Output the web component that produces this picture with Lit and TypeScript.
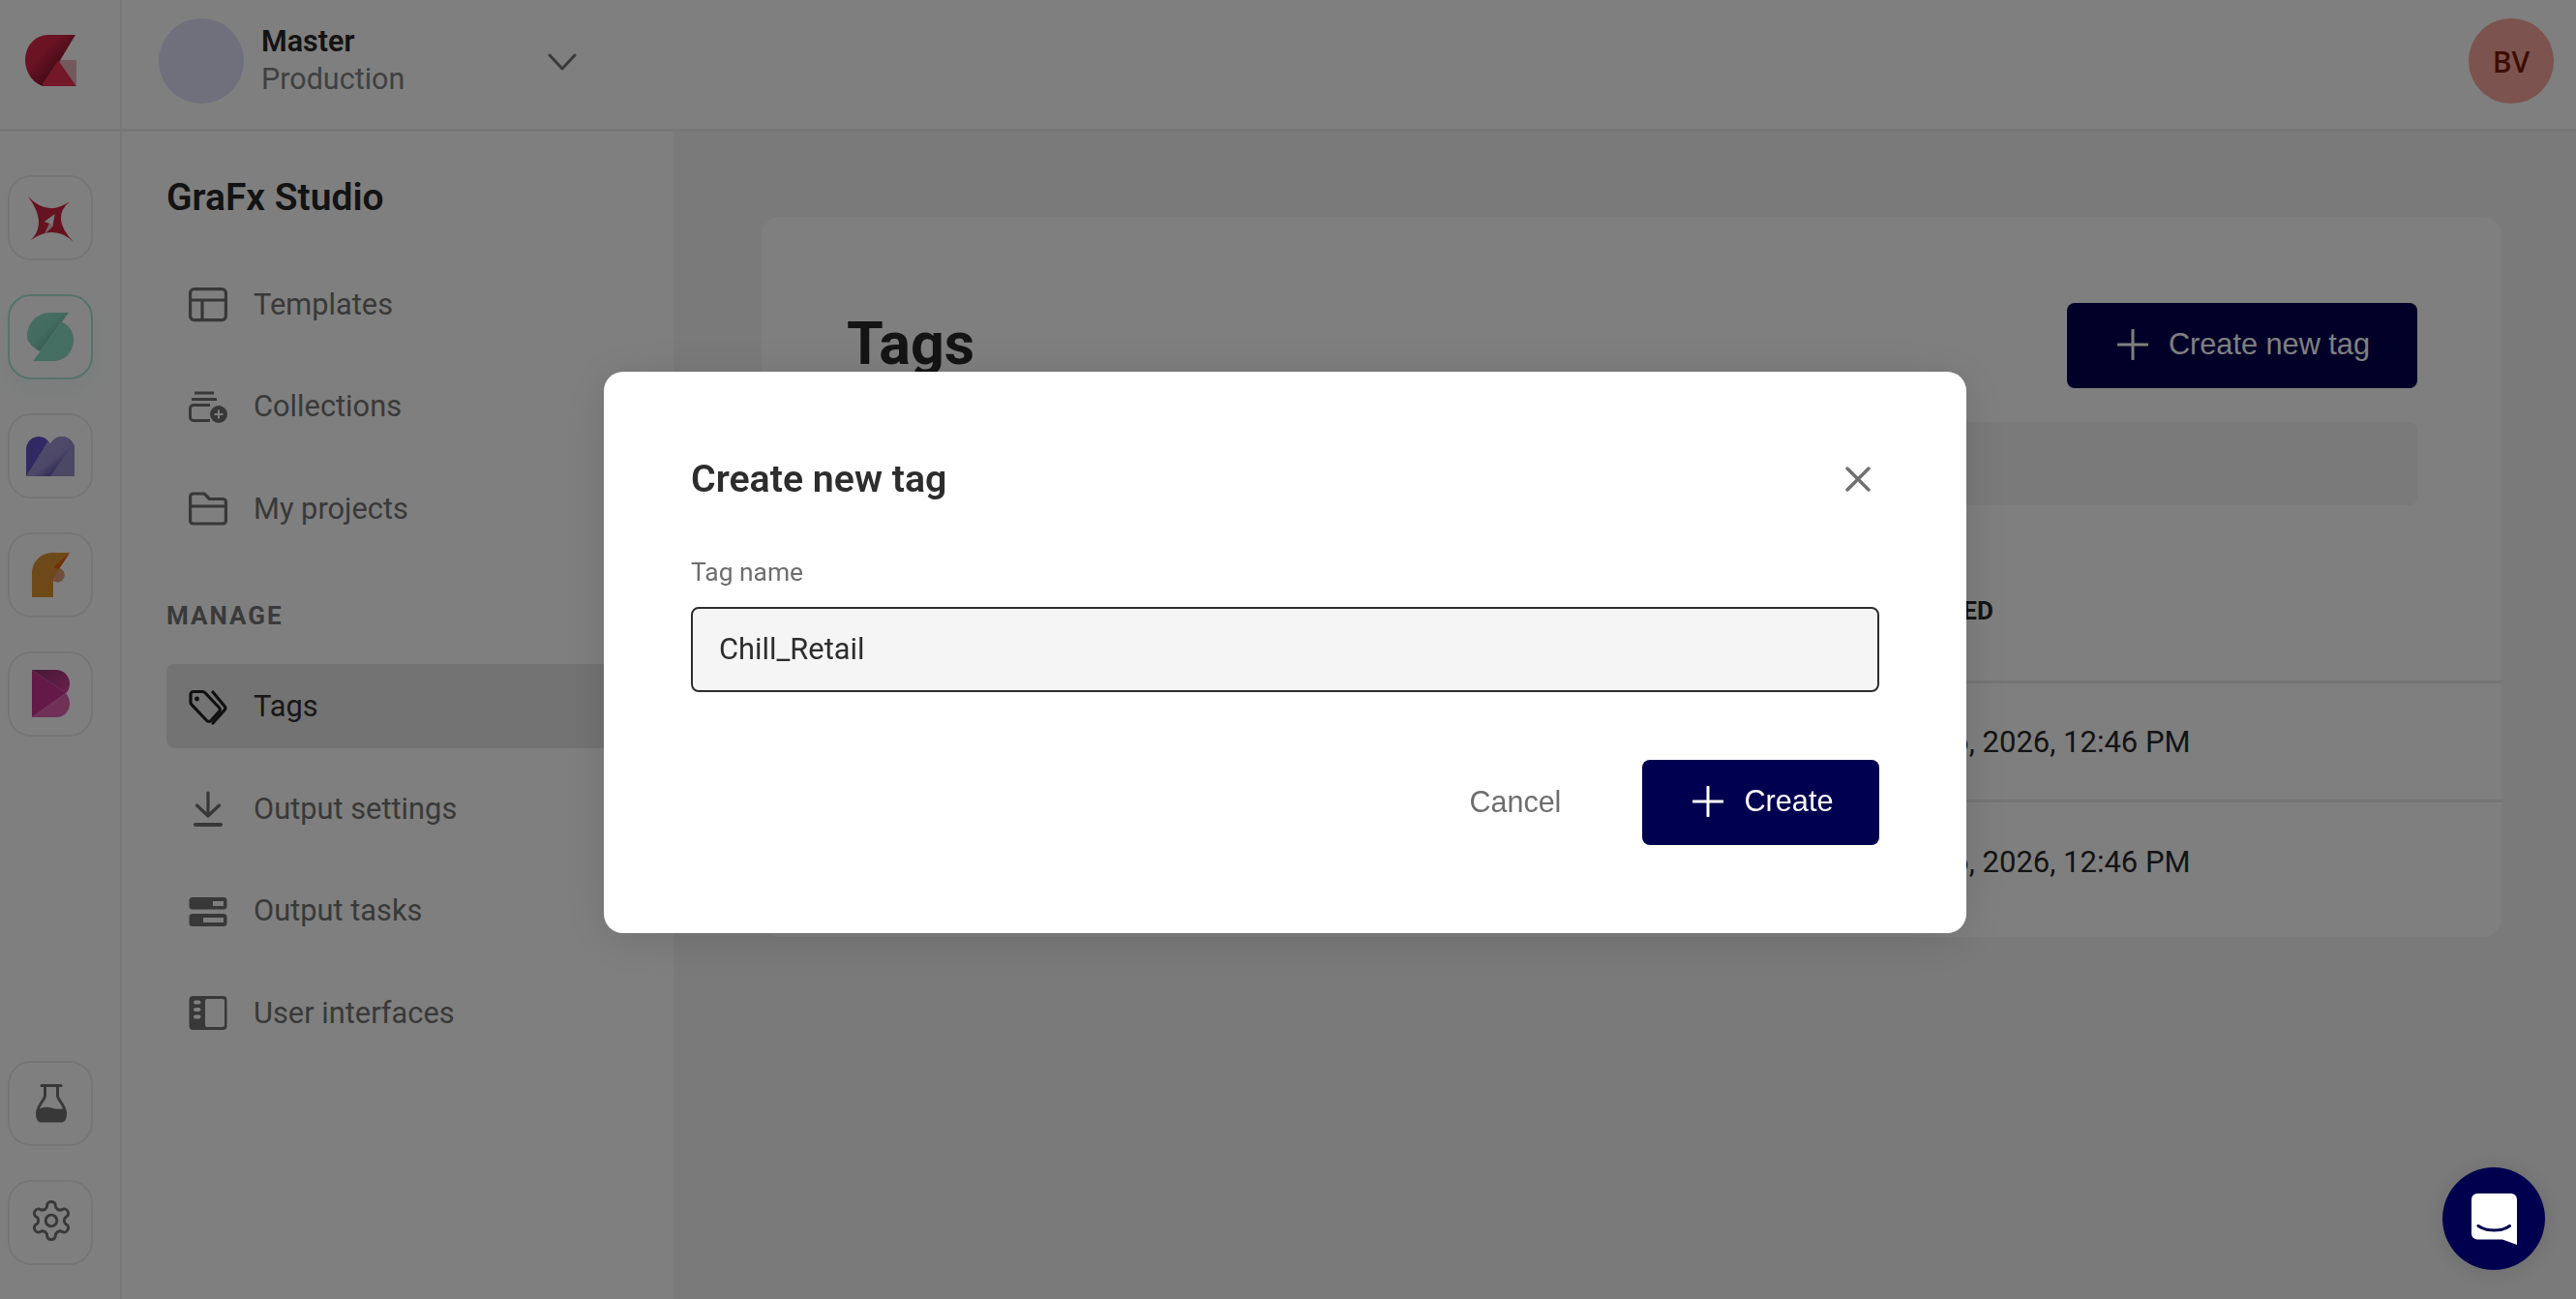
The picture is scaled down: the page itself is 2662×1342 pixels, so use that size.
import { LitElement, html, css, svg } from "lit";
import { customElement } from "lit/decorators.js";

const D = "#707070";
const navIcons: Record<string, unknown> = {
  templates: svg`<rect x="1.6" y="4.6" width="36.8" height="32" rx="4" fill="none" stroke="${D}" stroke-width="3.2"/><path d="M2 16H38M14 16V36" fill="none" stroke="${D}" stroke-width="3.2"/>`,
  collections: svg`<path d="M6 6H26M3 12.5H29" stroke="${D}" stroke-width="3" fill="none"/><path d="M22 18.5H5a3.5 3.5 0 0 0-3.500 3.500V31a3.500 3.500 0 0 0 3.500 3.500H22" stroke="${D}" stroke-width="3" fill="none"/><circle cx="31" cy="28" r="9" fill="${D}"/><path d="M31 23.500V32.500M26.500 28H35.500" stroke="#fff" stroke-width="2"/>`,
  folder: svg`<path d="M1.600 8a3 3 0 0 1 3-3H16l5.500 5.500H35.400a3 3 0 0 1 3 3V33a3 3 0 0 1-3 3H4.600a3 3 0 0 1-3-3Z" fill="none" stroke="${D}" stroke-width="3.200" stroke-linejoin="round"/><path d="M2 18H38" stroke="${D}" stroke-width="3.200"/>`,
  tags: svg`<path d="M5 4.500H14.500a3 3 0 0 1 2.200 1L31.500 21a3 3 0 0 1 0 4.200L23 34.500a3 3 0 0 1-4.300 0L3 18a3 3 0 0 1-1-2.200V7.500a3 3 0 0 1 3-3Z" fill="none" stroke="#202020" stroke-width="3.200"/><circle cx="8.500" cy="12" r="2.400" fill="#202020"/><path d="M25 5L37 19.500a3 3 0 0 1 0 4L25 37" fill="none" stroke="#202020" stroke-width="3.200" stroke-linecap="round"/>`,
  download: svg`<path d="M20 4V28M8.500 17L20 28L31.500 17" fill="none" stroke="${D}" stroke-width="3.200" stroke-linecap="round" stroke-linejoin="round"/><path d="M7 37H33" stroke="${D}" stroke-width="4" stroke-linecap="round"/>`,
  tasks: svg`<rect x="0.500" y="6" width="39" height="12.500" rx="3.500" fill="${D}"/><rect x="25" y="10" width="11" height="5" fill="#fff"/><rect x="0.500" y="23" width="39" height="13" rx="3.500" fill="${D}"/><rect x="15" y="27" width="21" height="5" fill="#fff"/>`,
  ui: svg`<rect x="0.500" y="3" width="39" height="35" rx="4" fill="${D}"/><rect x="17" y="6" width="20" height="29" rx="2" fill="#fff"/><rect x="5" y="7.500" width="7.500" height="4" rx="2" fill="#fff"/><rect x="5" y="15" width="7.500" height="4" rx="2" fill="#fff"/><rect x="5" y="22.500" width="7.500" height="4" rx="2" fill="#fff"/>`,
};

const railIcons = {
  star: svg`<path d="M21 22Q41.500 43.500 64 27Q44 44 68 69Q48 50 24 67Q41.500 49.500 21 22Z" fill="#cc2440"/><path d="M48.700 40L37.700 48L42.700 49.700L46.500 53Z" fill="#f4f0f0"/><path d="M43 49.700L37.500 61.500L46.500 53Z" fill="#e8c8cc"/>`,
  green: svg`<defs><linearGradient id="g1" x1="0" y1="0" x2="1" y2="1"><stop offset="0" stop-color="#90dcc8"/><stop offset=".45" stop-color="#88d6c0"/><stop offset=".75" stop-color="#66b49e"/></linearGradient></defs><path d="M63 19H44C30 19 20 30 20 43C20 50 26 55 33.400 59Z" fill="url(#g1)"/><path d="M26 69H47C59 69 68 60 68 47C68 39 64 32 56 28.700Z" fill="#8adcc6"/>`,
  m: svg`<defs><linearGradient id="g2" x1="0" y1="0" x2="1" y2="1"><stop offset="0" stop-color="#a89cdc"/><stop offset=".55" stop-color="#9c90d0"/><stop offset=".85" stop-color="#3e3096"/></linearGradient><clipPath id="mc"><path d="M19 65V37A13 13 0 0 1 44 32A13 13 0 0 1 69 37V65Z"/></clipPath></defs><g clip-path="url(#mc)"><rect x="19" y="24" width="50" height="41" fill="#6052c8"/><path d="M19 65L47 20H75L44 65Z" fill="url(#g2)"/><path d="M44 65L72 24V65Z" fill="#9490c8"/></g>`,
  f: svg`<defs><linearGradient id="g3" x1="0" y1="1" x2="1" y2="0"><stop offset="0" stop-color="#dc9028"/><stop offset=".6" stop-color="#e09030"/><stop offset="1" stop-color="#e84c08"/></linearGradient></defs><circle cx="51.300" cy="44" r="7.500" fill="#e09c78"/><path d="M25 67V43C25 30 34 21 47 21H64L47 47V67Z" fill="#dc9434"/><path d="M25 67L62 24L64 21L47 47V67Z" fill="url(#g3)"/><path d="M47 36L64 21L52 38Z" fill="#e84c08" opacity=".7"/>`,
  b: svg`<defs><linearGradient id="g4" x1="0" y1="0" x2="1" y2="1"><stop offset="0" stop-color="#883270"/><stop offset="1" stop-color="#d84096"/></linearGradient></defs><path d="M25 19H50C58 19 64 26 64 33C64 38 62 42 60 43L25 19Z" fill="url(#g4)"/><path d="M25 19L60 43L25 68Z" fill="#c83292"/><path d="M25 68L60 43C62 45 64 50 64 54C64 62 58 68 50 68Z" fill="#e060b0"/>`,
  flask: svg`<path d="M35 25.500H55" stroke="${D}" stroke-width="3" stroke-linecap="round"/><path d="M38.500 26V36C38.500 40 30.500 46 30.500 54C30.500 58 32 61.500 34 62H56C58 61.500 59.500 58 59.500 54C59.500 46 51.500 40 51.500 36V26" fill="none" stroke="${D}" stroke-width="3"/><path d="M30 52C34 47 40 47 45 48.500C50 50 55 50 60 49V55C60 59 58 63 56 63H34C32 63 30 59 30 55Z" fill="${D}"/>`,
  gear: svg`<g transform="translate(21.600 18.600) scale(1.950)" fill="none" stroke="${D}" stroke-width="1.500"><path d="M12.220 2h-.440a2 2 0 0 0-2 2v.180a2 2 0 0 1-1 1.730l-.430.250a2 2 0 0 1-2 0l-.150-.080a2 2 0 0 0-2.730.730l-.220.380a2 2 0 0 0 .730 2.730l.150.100a2 2 0 0 1 1 1.720v.510a2 2 0 0 1-1 1.740l-.150.090a2 2 0 0 0-.730 2.730l.220.380a2 2 0 0 0 2.730.730l.150-.080a2 2 0 0 1 2 0l.430.250a2 2 0 0 1 1 1.730V20a2 2 0 0 0 2 2h.440a2 2 0 0 0 2-2v-.180a2 2 0 0 1 1-1.730l.430-.250a2 2 0 0 1 2 0l.150.080a2 2 0 0 0 2.730-.730l.220-.390a2 2 0 0 0-.730-2.730l-.150-.080a2 2 0 0 1-1-1.740v-.500a2 2 0 0 1 1-1.740l.150-.090a2 2 0 0 0 .730-2.730l-.220-.380a2 2 0 0 0-2.730-.730l-.150.080a2 2 0 0 1-2 0l-.430-.250a2 2 0 0 1-1-1.730V4a2 2 0 0 0-2-2z"/><circle cx="12" cy="12" r="3"/></g>`,
};

const plus = html`<svg class="plus" viewBox="0 0 32 32"><path d="M16 1V31M1 16H31" fill="none" stroke="currentColor" stroke-width="3" stroke-linecap="round"/></svg>`;

@customElement("app-root")
export class AppRoot extends LitElement {
  static styles = css`
    :host { display: block; height: 100vh; overflow: hidden; position: relative; font-family: Roboto, "Liberation Sans", sans-serif; color: #282828; background: #f5f5f5; }
    .top { height: 136px; display: flex; background: #fff; border-bottom: 3px solid #eeeeee; box-sizing: border-box; }
    .logo { width: 126px; box-sizing: border-box; border-right: 2px solid #eeeeee; flex: none; }
    .logo svg { display: block; width: 124px; height: 133px; }
    .env { display: flex; align-items: center; padding: 0 0 8px 38px; flex: 1; }
    .env-dot { width: 88px; height: 88px; border-radius: 50%; background: #e0e0fa; flex: none; }
    .env-text { margin-left: 18px; width: 296px; line-height: 39px; padding-bottom: 2px; font-size: 30.500px; }
    .env-text b { display: block; font-weight: 600; color: #262626; }
    .env-text span { display: block; color: #808080; }
    .chev { width: 30px; height: 18px; flex: none; margin-top: 3px; }
    .me { width: 88px; height: 88px; border-radius: 50%; background: #f8a69c; color: #7a1a00; font-size: 30px; font-weight: 600; display: flex; align-items: center; justify-content: center; margin: 19px 23px 0 0; flex: none; font-family: "Open Sans", sans-serif; }
    .body { display: flex; height: calc(100vh - 136px); }
    .rail { width: 126px; box-sizing: border-box; flex: none; background: #fff; border-right: 2px solid #eeeeee; padding: 45px 0 35px 8px; display: flex; flex-direction: column; gap: 35px; }
    .rail .spacer { flex: 1; margin-bottom: -35px; }
    .rbtn { width: 88px; height: 88px; box-sizing: border-box; border: 2px solid #ebebeb; border-radius: 24px; flex: none; }
    .rbtn.on { border-color: #a8e6d6; box-shadow: 0 10px 20px rgba(120, 220, 190, .12); }
    .rbtn svg { display: block; width: 84px; height: 84px; }
    .side { width: 570px; box-sizing: border-box; flex: none; background: #fff; padding: 44px 24px 0 46px; }
    .side h2 { margin: 0 0 42.500px; font-size: 39px; line-height: 48px; font-weight: 600; color: #262626; }
    .item { height: 87px; display: flex; align-items: center; padding-left: 23px; gap: 27px; font-size: 30.800px; color: #727272; border-radius: 8px; margin-bottom: 18.500px; }
    .item svg { width: 40px; height: 40px; flex: none; }
    .item.on { background: #e6e6e6; color: #303030; }
    .sec { font-size: 26px; line-height: 32px; font-weight: 700; letter-spacing: 2px; color: #747474; margin: 51.500px 0 34px; }
    .main { flex: 1; padding: 88px 77px 0 91px; }
    .card { background: #fff; border-radius: 20px; height: 744px; padding-top: 89px; box-sizing: border-box; }
    .card-head { display: flex; justify-content: space-between; align-items: center; padding: 0 87px 0 88px; }
    .card-head h1 { margin: 0; padding-bottom: 4px; font-size: 61px; font-weight: 700; color: #282828; }
    .btn { display: flex; align-items: center; gap: 21px; height: 88px; box-sizing: border-box; padding: 0 49px 2px 52px; background: #000050; color: #fff; border-radius: 8px; font-family: "Liberation Sans", Arial, sans-serif; font-size: 30.700px; flex: none; }
    .actions .btn { padding-right: 47.500px; }
    .plus { width: 32px; height: 32px; flex: none; }
    .search { height: 86px; margin: 35px 87px 0 88px; background: #f5f5f5; border-radius: 8px; }
    .thead, .row { display: grid; grid-template-columns: 1161px 1fr; align-items: center; }
    .thead { height: 184px; padding-top: 36px; box-sizing: border-box; border-bottom: 3px solid #ebebeb; font-size: 26px; font-weight: 700; color: #282828; }
    .row { height: 123px; box-sizing: border-box; border-bottom: 3px solid #ebebeb; font-size: 31px; color: #282828; }
    .row span:last-child { padding-left: 11px; }
    .row:last-child { border-bottom: 0; }
    .scrim { position: fixed; inset: 0; background: rgba(0, 0, 0, .5); padding: 384px 0 0 624px; box-sizing: border-box; }
    .modal { width: 1408px; height: 580px; box-sizing: border-box; padding: 88px 90px 0; background: #fff; border-radius: 20px; box-shadow: 0 6px 50px rgba(0, 0, 0, .12); color: #2d2d2d; }
    .m-head { display: flex; justify-content: space-between; align-items: center; height: 46px; }
    .m-head h3 { margin: 0; font-size: 39.300px; font-weight: 600; }
    .x { width: 26px; height: 26px; margin-right: 9px; }
    .label { font-size: 26.400px; line-height: 32px; color: #6e6e6e; margin: 57px 0 20px; }
    .input { height: 88px; box-sizing: border-box; border: 2px solid #2d2d2d; border-radius: 8px; background: #f5f5f5; display: flex; align-items: center; padding: 0 0 2px 27px; font-size: 30.800px; }
    .actions { display: flex; justify-content: flex-end; align-items: center; margin-top: 70px; }
    .cancel { font-family: "Liberation Sans", Arial, sans-serif; font-size: 30.500px; color: #6e6e6e; margin-right: 84px; padding-bottom: 2px; }
    .chat { position: fixed; left: 2524px; top: 1206px; width: 106px; height: 106px; border-radius: 50%; background: #00004f; box-shadow: 0 2px 24px rgba(0, 0, 0, .12); display: flex; align-items: center; justify-content: center; }
    .chat svg { width: 47px; height: 53px; }
  `;

  render() {
    const nav = (k: string, t: string, on = false) => html`<div class="item ${on ? "on" : ""}"><svg viewBox="0 0 40 40">${navIcons[k]}</svg>${t}</div>`;
    const rb = (k: keyof typeof railIcons, on = false) => html`<div class="rbtn ${on ? "on" : ""}"><svg viewBox="2 2 84 84">${railIcons[k]}</svg></div>`;
    return html`
      <div class="top">
        <div class="logo"><svg viewBox="0 0 124 133">
          <defs><linearGradient id="lg" x1="0" y1="0" x2="1" y2="1"><stop offset="0" stop-color="#dc284a"/><stop offset=".35" stop-color="#d42646"/><stop offset=".7" stop-color="#80122c"/></linearGradient></defs>
          <path d="M60 62L79 62V89Z" fill="#e8b4bc"/>
          <path d="M78 36H50C36 36 26 48 26 62C26 76 36 88 46 89Z" fill="url(#lg)"/>
          <path d="M60 62L79 89H46C44 89 43 88 43 88Z" fill="#e63052"/>
        </svg></div>
        <div class="env">
          <div class="env-dot"></div>
          <div class="env-text"><b>Master</b><span>Production</span></div>
          <svg class="chev" viewBox="0 0 30 18"><path d="M2 2L15 16L28 2" fill="none" stroke="#747474" stroke-width="3" stroke-linecap="round" stroke-linejoin="round"/></svg>
        </div>
        <div class="me">BV</div>
      </div>
      <div class="body">
        <div class="rail">
          ${rb("star")}${rb("green", true)}${rb("m")}${rb("f")}${rb("b")}
          <div class="spacer"></div>
          ${rb("flask")}${rb("gear")}
        </div>
        <div class="side">
          <h2>GraFx Studio</h2>
          ${nav("templates", "Templates")}${nav("collections", "Collections")}${nav("folder", "My projects")}
          <div class="sec">MANAGE</div>
          ${nav("tags", "Tags", true)}${nav("download", "Output settings")}${nav("tasks", "Output tasks")}${nav("ui", "User interfaces")}
        </div>
        <div class="main">
          <div class="card">
            <div class="card-head"><h1>Tags</h1><div class="btn">${plus}Create new tag</div></div>
            <div class="search"></div>
            <div class="thead"><span></span><span>CREATED</span></div>
            <div class="row"><span></span><span>Feb 6, 2026, 12:46 PM</span></div>
            <div class="row"><span></span><span>Feb 6, 2026, 12:46 PM</span></div>
          </div>
        </div>
      </div>
      <div class="scrim">
        <div class="modal">
          <div class="m-head"><h3>Create new tag</h3><svg class="x" viewBox="0 0 26 26"><path d="M2 2L24 24M24 2L2 24" fill="none" stroke="#707070" stroke-width="3.500" stroke-linecap="round"/></svg></div>
          <div class="label">Tag name</div>
          <div class="input">Chill_Retail</div>
          <div class="actions"><span class="cancel">Cancel</span><div class="btn">${plus}Create</div></div>
        </div>
      </div>
      <div class="chat"><svg viewBox="0 0 47 53"><path d="M6 0H41a6 6 0 0 1 6 6V53L32 47.500H6a6 6 0 0 1-6-6V6a6 6 0 0 1 6-6Z" fill="#fff"/><path d="M7 33.500C15 39.500 32 39.500 39.500 33.500" fill="none" stroke="#00004f" stroke-width="3" stroke-linecap="round"/></svg></div>
    `;
  }
}
